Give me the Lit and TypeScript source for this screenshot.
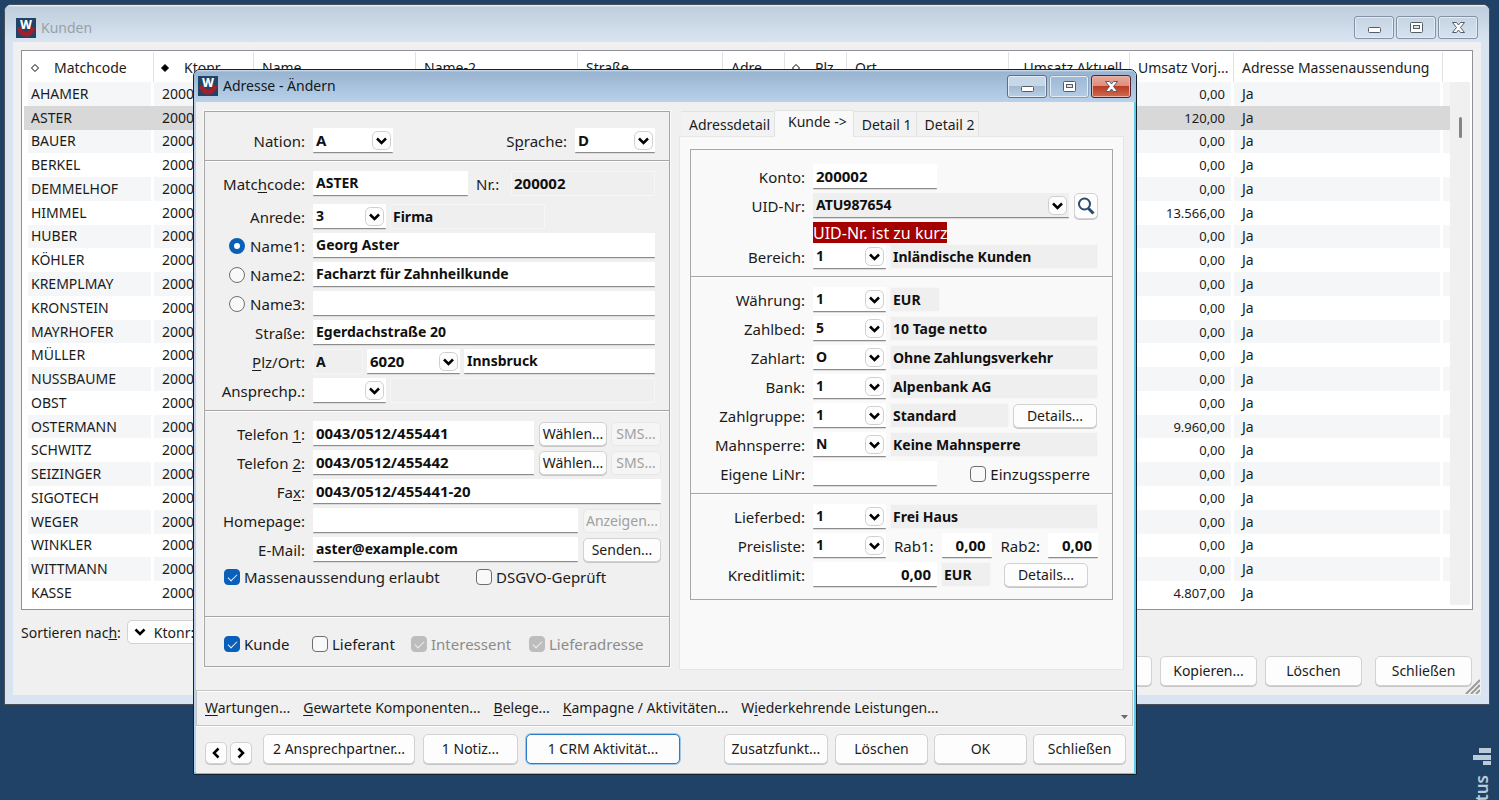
import { LitElement, html, css, svg, nothing } from "lit";
import { customElement, property } from "lit/decorators.js";
import { classMap } from "lit/directives/class-map.js";

const logo = html`<svg class="logo" viewBox="0 0 20 20" width="20" height="20" overflow="visible" aria-hidden="true">
  <rect width="20" height="20" fill="#1f4468"></rect>
  <path d="M1 9.500a9 9.300 0 0 0 18 0h-4.500a4.600 4.600 0 0 1-9 0z" fill="#a01f2c"></path>
  <text x="10" y="11" text-anchor="middle" font-family="Noto Sans, sans-serif" font-weight="800" font-size="12" fill="#fff">W</text>
</svg>`;

const glyphs = {
  min: svg`<rect x="3.500" y="8.500" width="12" height="5" rx="1" fill="#fff" stroke="#555c66"></rect>`,
  max: svg`<rect x="3.500" y="3.500" width="12" height="10" rx="1" fill="#fff" stroke="#555c66"></rect>
    <rect x="6.500" y="6.500" width="6" height="3" fill="#dfe6ee" stroke="#555c66"></rect>`,
  close: svg`<path d="M3.500 3.500h4l2 2.500 2-2.500h4l-4 5 4 5h-4l-2-2.500-2 2.500h-4l4-5z" fill="#fff" stroke="#555c66" stroke-linejoin="round"></path>`,
};

@customElement("win-frame")
export class WinFrame extends LitElement {
  @property() heading = "";
  @property({ type: Boolean, reflect: true }) active = false;

  static styles = css`
    :host {
      display: block;
      box-sizing: border-box;
      border: 1px solid #4a4f55;
      border-radius: 7px 7px 0 0;
      background: #d8e4f1;
      padding: 0 8px 9px;
      font-family: "Noto Sans", sans-serif;
    }
    :host([active]) {
      border-color: #12212c;
      background: #b9d1ea;
      padding: 0 2px 1px;
      box-shadow: inset -1px -1px 0 1px #5fcbe6;
    }
    .bar {
      display: flex;
      align-items: center;
      height: 37px;
      margin: 0 -8px;
      padding: 8px 11px 0;
      box-sizing: border-box;
      border-radius: 6px 6px 0 0;
      background: linear-gradient(#f4f8fb, #bfcedd 2px, #d8e4f1);
    }
    :host([active]) .bar {
      height: 32px;
      margin: 0 -2px;
      padding: 0 5px 0 4px;
      background: linear-gradient(#d4e2f0, #99b4d1 2px, #b9d1ea);
      box-shadow: inset -1px 0 0 #8fd2ea;
    }
    h1 {
      flex: 1;
      margin: 0 0 0 5px;
      font-size: 14px;
      line-height: 20px;
      font-weight: 400;
      color: #9aa0a8;
    }
    :host([active]) h1 {
      color: #101820;
    }
    .controls {
      display: flex;
      gap: 2px;
    }
    .controls button {
      width: 40px;
      height: 23px;
      padding: 0;
      display: grid;
      place-items: center;
      border: 1px solid #8391a2;
      border-radius: 3px;
      background: transparent;
      box-shadow: inset 0 0 0 1px #e3ecf5;
    }
    :host([active]) .controls button {
      border-color: #5c6f84;
      background: linear-gradient(#c6d7e8 50%, #a3bad2 50%, #b9cfe5);
    }
    :host([active]) .controls button.maxi {
      border-color: #8aa3bf;
      background: transparent;
    }
    :host([active]) .controls button.shut {
      border-color: #55222a;
      background: linear-gradient(#e9a99c, #d98c7c 50%, #b93c24 50%, #cf6a50);
      box-shadow: inset 0 0 0 1px #e8b3a8;
    }
    .client {
      background: #f0f0f0;
    }
  `;

  render() {
    return html`
      <header class="bar">
        ${logo}
        <h1>${this.heading}</h1>
        <div class="controls">
          <button aria-label="Minimieren"><svg width="19" height="17">${glyphs.min}</svg></button>
          <button class="maxi" aria-label="Maximieren"><svg width="19" height="17">${glyphs.max}</svg></button>
          <button class="shut" aria-label="Fenster schließen"><svg width="19" height="17">${glyphs.close}</svg></button>
        </div>
      </header>
      <div class="client"><slot></slot></div>
    `;
  }
}

const controls = css`
  * {
    box-sizing: border-box;
  }
  input,
  select,
  button {
    font-family: inherit;
    color: inherit;
    margin: 0;
  }
  .btn {
    height: 30px;
    padding: 0 4px;
    border: 1px solid #d2d2d2;
    border-radius: 5px;
    background: #fdfdfd;
    font-size: 14px;
    line-height: 20px;
    white-space: nowrap;
    box-shadow: 0 1px 0 #c6c6c6;
  }
  .btn.small {
    height: 24px;
    padding: 0;
  }
  .btn.focus {
    border: 1px solid #2a7cc7;
    box-shadow: 0 0 0 1px #9cc6ea;
  }
  .btn:disabled {
    color: #a0a0a0;
    background: #f5f5f5;
    border-color: #e8e8e8;
    box-shadow: none;
  }
  .btn.wide {
    width: 93px;
  }
`;

const names = ["AHAMER", "ASTER", "BAUER", "BERKEL", "DEMMELHOF", "HIMMEL", "HUBER", "KÖHLER", "KREMPLMAY", "KRONSTEIN", "MAYRHOFER", "MÜLLER", "NUSSBAUME", "OBST", "OSTERMANN", "SCHWITZ", "SEIZINGER", "SIGOTECH", "WEGER", "WINKLER", "WITTMANN", "KASSE"];
const turnover: Record<string, string> = { ASTER: "120,00", HIMMEL: "13.566,00", OSTERMANN: "9.960,00", KASSE: "4.807,00" };

const diamond = (fill: string) => html`<svg class="sort" width="10" height="10" viewBox="0 0 10 10" aria-hidden="true">
  <path d="M5 1.500 8.500 5 5 8.500 1.500 5z" fill=${fill} stroke="#000"></path></svg>`;

@customElement("customer-list")
export class CustomerList extends LitElement {
  static styles = [
    controls,
    css`
      :host {
        display: block;
        padding: 8px 8px 9px;
        font-size: 14px;
        color: #1b1b1b;
      }
      .frame {
        display: flex;
        padding: 1px 2px 4px;
        border: 1px solid #8e9197;
        background: #fff;
      }
      table {
        flex: 1;
        width: 100%;
        height: 553px;
        table-layout: fixed;
        border-collapse: separate;
        border-spacing: 0;
      }
      .c-code { width: 130px; }
      .c-no { width: 100px; }
      .c-name { width: 162px; }
      .c-street { width: 145px; }
      .c-short { width: 62px; }
      .c-turn { width: 121px; }
      .c-prev { width: 104px; }
      .c-mass { width: 209px; }
      th {
        height: 30px;
        padding: 0 0 0 8px;
        border-right: 1px solid #e2e2e2;
        text-align: left;
        font-weight: 400;
        white-space: nowrap;
        overflow: hidden;
      }
      th:last-child {
        border: 0;
      }
      th.num {
        padding-right: 7px;
        text-align: right;
      }
      .sort {
        margin: 0 14px 0 -2px;
      }
      td {
        padding: 0 0 0 8px;
        line-height: 20px;
        border-right: 3px solid #fff;
      }
      td:first-child {
        padding-left: 3px;
        border-left: 4px solid #fff;
      }
      td:last-child {
        border-right: 0;
      }
      td.num {
        padding-right: 6px;
        text-align: right;
        font-size: 13px;
      }
      tbody tr:nth-child(odd) td {
        background: #f4f6f8;
      }
      tbody tr.selected td {
        background: #d8d8d8;
        border-color: #d8d8d8;
      }
      .scroll {
        width: 20px;
        margin-top: 30px;
        padding-top: 35px;
        background: #f0f0f0;
      }
      .thumb {
        width: 3px;
        height: 21px;
        margin-left: 9px;
        border-radius: 2px;
        background: #858585;
      }
      .order {
        display: flex;
        align-items: center;
        margin-top: 10px;
      }
      .pick {
        position: relative;
        margin-left: 6px;
      }
      .pick select {
        appearance: none;
        width: 190px;
        height: 24px;
        padding: 0 0 0 26px;
        border: 1px solid #d2d2d2;
        border-radius: 5px;
        background: #fdfdfd;
        font-size: 14px;
      }
      .pick svg {
        position: absolute;
        left: 7px;
        top: 7px;
        pointer-events: none;
      }
      .actions {
        display: flex;
        justify-content: flex-end;
        gap: 8px;
        margin-top: 12px;
        padding-right: 1px;
      }
      .actions .btn {
        width: 97px;
      }
      .actions .btn:last-of-type {
        margin-left: 5px;
      }
      .grip {
        position: absolute;
        right: 9px;
        bottom: 10px;
      }
    `,
  ];

  render() {
    return html`
      <div class="frame">
        <table>
          <colgroup>
            <col class="c-code"><col class="c-no"><col class="c-name"><col class="c-name"><col class="c-street">
            <col class="c-short"><col class="c-short"><col class="c-name"><col class="c-turn"><col class="c-prev"><col class="c-mass"><col>
          </colgroup>
          <thead>
            <tr>
              <th>${diamond("#fff")}Matchcode</th><th>${diamond("#000")}Ktonr</th><th>Name</th><th>Name-2</th><th>Straße</th>
              <th>Adre...</th><th>${diamond("#fff")}Plz</th><th>Ort</th><th class="num">Umsatz Aktuell</th><th>Umsatz Vorj...</th>
              <th>Adresse Massenaussendung</th><th></th>
            </tr>
          </thead>
          <tbody>
            ${names.map((name, i) => html`
              <tr class=${classMap({ selected: name === "ASTER" })}>
                <td>${name}</td><td>${200001 + i}</td><td></td><td></td><td></td><td></td><td></td><td></td><td></td>
                <td class="num">${turnover[name] ?? "0,00"}</td><td>Ja</td><td></td>
              </tr>`)}
          </tbody>
        </table>
        <div class="scroll"><div class="thumb"></div></div>
      </div>
      <div class="order">
        <label for="order">Sortieren nac<u>h</u>:</label>
        <span class="pick">
          <select id="order"><option>Ktonr:</option></select>
          <svg width="12" height="10"><path d="M1.500 2.500 6 7l4.500-4.500" fill="none" stroke="#000" stroke-width="2.500"></path></svg>
        </span>
      </div>
      <div class="actions">
        <button class="btn">Ändern...</button>
        <button class="btn">Kopieren...</button>
        <button class="btn">Löschen</button>
        <button class="btn">Schließen</button>
      </div>
      <svg class="grip" width="15" height="15"><path d="M1 15 15 1M6 15 15 6M11 15l4-4" stroke="#9a9a9a" stroke-width="2"></path></svg>
    `;
  }
}

type Opt = { ro?: boolean; right?: boolean; digits?: boolean };

@customElement("address-form")
export class AddressForm extends LitElement {
  static styles = [
    controls,
    css`
      :host {
        display: block;
        color: #1b1b1b;
        font-size: 15px;
        line-height: 20px;
      }
      .panes {
        display: flex;
        align-items: flex-start;
        gap: 9px;
        padding: 8px 10px 20px 8px;
      }
      .box {
        border: 1px solid #a6a6a6;
        box-shadow: 0 0 0 1px #fafafa;
      }
      .left {
        flex: 0 0 466px;
        margin-top: 1px;
      }
      .right {
        flex: 1;
        min-width: 0;
      }
      section {
        padding: 9px 14px 3px 0;
      }
      section + section {
        border-top: 1px solid #a6a6a6;
        box-shadow: inset 0 1px 0 #fdfdfd;
        padding-top: 10px;
      }
      .left section:first-child {
        padding-top: 16px;
      }
      .right section:first-child {
        padding-top: 14px;
      }
      .right section:last-child {
        padding-bottom: 8px;
      }
      .left section.contact {
        padding-right: 8px;
        padding-bottom: 28px;
      }
      .left section.roles {
        padding: 16px 0 11px;
      }
      .row {
        display: flex;
        align-items: center;
        height: 25px;
        margin-bottom: 4px;
      }
      .row.apart {
        margin-bottom: 8px;
      }
      .lead {
        flex: none;
        width: 100px;
        margin-right: 8px;
        display: flex;
        justify-content: flex-end;
        align-items: center;
        gap: 5px;
        white-space: nowrap;
      }
      .right .lead {
        width: 114px;
      }
      .mid {
        margin: 0 8px;
        white-space: nowrap;
      }
      .push {
        margin-left: auto;
      }
      u {
        text-underline-offset: 2px;
      }
      .field {
        width: 100%;
        height: 25px;
        padding: 0 3px 1px;
        border: 0;
        border-bottom: 1px solid #8c8c8c;
        background: #fff;
        font-size: 14px;
        font-weight: 700;
        color: #101010;
        border-radius: 1px;
        box-shadow: 0 1px 0 #dcdcdc;
        outline: 0;
      }
      .field.ro {
        border: 1px solid #f6f6f6;
        background: #efefef;
        padding: 0 2px 1px;
        box-shadow: none;
      }
      .field.digits {
        font-size: 15px;
      }
      .field.rt {
        padding-right: 6px;
        text-align: right;
      }
      .combo {
        position: relative;
        flex: none;
        display: block;
      }
      .combo select {
        appearance: none;
      }
      .combo.grey select {
        background: #efefef;
      }
      .combo svg {
        position: absolute;
        right: 2px;
        top: 3px;
        pointer-events: none;
      }
      .cell {
        flex: none;
      }
      .cell,
      .combo {
        line-height: 0;
      }
      .grow {
        flex: 1;
        min-width: 0;
      }
      .gap4 {
        margin-left: 4px;
      }
      .w50 { width: 50px; }
      .w73 { width: 73px; }
      .w80 { width: 80px; }
      .w93 { width: 93px; }
      .w119 { width: 119px; }
      .w124 { width: 124px; }
      .w144 { width: 144px; }
      .w155 { width: 155px; }
      .w256 { width: 256px; }
      .call { width: 68px; margin-left: 5px; }
      .sms { width: 50px; margin-left: 4px; }
      .web { width: 78px; margin-left: 5px; }
      .details { width: 84px; margin-left: 4px; }
      .details.far { margin: 0 10px 0 auto; }
      .lens {
        width: 26px;
        height: 26px;
        margin-left: 5px;
        padding: 0;
        display: grid;
        place-items: center;
      }
      .warn {
        display: flex;
        height: 22px;
        padding-left: 122px;
      }
      .warn span {
        height: 21px;
        background: #a40000;
        color: #fff;
        font-size: 16px;
        line-height: 22px;
      }
      input[type="checkbox"],
      input[type="radio"] {
        appearance: none;
        flex: none;
        width: 16px;
        height: 16px;
        border: 1px solid #6e6e6e;
        border-radius: 4px;
        background: #f9f9f9;
        display: grid;
        place-items: center;
      }
      input[type="radio"] {
        border-radius: 50%;
      }
      input[type="radio"]:checked {
        border: 5px solid #0a5fb8;
        background: #fff;
      }
      input[type="checkbox"]:checked {
        border-color: #0a5fb8;
        background: #0a5fb8;
      }
      input[type="checkbox"]:checked::after {
        content: "";
        width: 8px;
        height: 4px;
        border: solid #e8f2fb;
        border-width: 0 0 1px 1px;
        transform: translateY(-1px) rotate(-45deg);
      }
      input[type="checkbox"]:disabled {
        border-color: #bdbdbd;
        background: #bdbdbd;
      }
      .check {
        display: flex;
        align-items: center;
        gap: 4px;
        white-space: nowrap;
      }
      .check.off {
        color: #8b8b8b;
      }
      .checks {
        display: grid;
        align-items: center;
        height: 22px;
        padding-left: 19px;
        grid-template-columns: 252px auto;
      }
      .roles .checks {
        grid-template-columns: 88px 99px 118px auto;
      }
      .tabs {
        display: flex;
        align-items: flex-end;
        height: 26px;
        padding-left: 2px;
      }
      .tab {
        height: 25px;
        padding: 1px 4px 0 8px;
        border: 1px solid #e2e2e2;
        border-width: 1px 1px 0 0;
        background: #f2f2f2;
        font-size: 14px;
        line-height: 20px;
        white-space: nowrap;
      }
      .tab.on {
        height: 27px;
        margin-bottom: -1px;
        padding: 0 6px 4px 13px;
        background: #f9f9f9;
        z-index: 1;
      }
      .page {
        padding: 12px 10px 69px;
        border: 1px solid #e6e6e6;
        background: #f9f9f9;
      }
      .menu {
        display: flex;
        position: relative;
        gap: 13px;
        margin: 0 1px 0 0;
        padding: 7px 8px;
        border: 1px solid #c4c4c4;
        font-size: 14px;
        box-shadow: inset 0 1px 0 #fff, 0 1px 0 #fff;
      }
      .menu a {
        color: inherit;
        text-decoration: none;
      }
      .menu svg {
        position: absolute;
        right: 4px;
        bottom: 6px;
      }
      .foot {
        display: flex;
        align-items: flex-end;
        padding: 8px 8px 9px 9px;
        gap: 6px;
      }
      .nav {
        width: 22px;
        height: 22px;
        padding: 0;
        display: grid;
        place-items: center;
      }
      .nav + .nav {
        margin-left: -3px;
        margin-right: 5px;
      }
      .persons { width: 152px; }
      .note { width: 95px; margin: 0 2px; }
      .crm { width: 154px; }
      .extra { width: 104px; margin-left: auto; margin-right: 1px; }
    `,
  ];

  private text(value: string, width: string, name: string, o: Opt = {}, id?: string) {
    const cls = { field: true, ro: !!o.ro, rt: !!o.right, digits: !!o.digits };
    return html`<span class="cell ${width}"><input id=${id ?? nothing} class=${classMap(cls)} .value=${value} ?readonly=${!!o.ro} aria-label=${id ? nothing : name}></span>`;
  }

  private combo(value: string, width: string, id: string, extra = "", digits = false) {
    return html`<span class="combo ${width} ${extra}">
      <select id=${id} class=${classMap({ field: true, digits })}><option>${value}</option></select>
      <svg width="19" height="20" viewBox="0 0 19 20" aria-hidden="true">
        <rect x="0.500" y="0.500" width="18" height="18" rx="5" fill="#fdfdfd" stroke="#cfcfcf"></rect>
        <path d="M5 7.500 9.500 12 14 7.500" fill="none" stroke="#000" stroke-width="2.500"></path>
      </svg></span>`;
  }

  private check(text: unknown, on = false, off = false) {
    return html`<label class=${classMap({ check: true, off })}><input type="checkbox" .checked=${on} ?disabled=${off}>${text}</label>`;
  }

  private lead(id: string, text: unknown) {
    return html`<label class="lead" for=${id}>${text}</label>`;
  }

  private nameRow(n: number, value: string) {
    return html`<div class="row">
      <span class="lead"><input type="radio" name="line" .checked=${n === 1} aria-label=${`Name ${n} verwenden`}><label for=${`name${n}`}>Name${n}:</label></span>
      ${this.text(value, "grow", "", {}, `name${n}`)}
    </div>`;
  }

  private lookup(id: string, label: string, code: string, desc: string) {
    return html`<div class="row">${this.lead(id, label)}${this.combo(code, "w73", id)}${this.text(desc, "grow gap4", `${label} Text`, { ro: true })}</div>`;
  }

  private get leftPane() {
    return html`<div class="left box">
      <section>
        <div class="row">
          ${this.lead("nation", "Nation:")}${this.combo("A", "w80", "nation", "", true)}
          <label class="mid push" for="lang">S<u>p</u>rache:</label>${this.combo("D", "w80", "lang", "", true)}
        </div>
      </section>
      <section>
        <div class="row apart">
          ${this.lead("match", html`<span>Matc<u>h</u>code:</span>`)}${this.text("ASTER", "w155", "", {}, "match")}
          <label class="mid" for="no">Nr.:</label>${this.text("200002", "w144 push", "", { ro: true, digits: true }, "no")}
        </div>
        <div class="row">
          ${this.lead("salut", "Anrede:")}${this.combo("3", "w73", "salut")}
          ${this.text("Firma", "w155 gap4", "Anrede Text", { ro: true })}
        </div>
        ${this.nameRow(1, "Georg Aster")} ${this.nameRow(2, "Facharzt für Zahnheilkunde")} ${this.nameRow(3, "")}
        <div class="row">${this.lead("street", "Straße:")}${this.text("Egerdachstraße 20", "grow", "", {}, "street")}</div>
        <div class="row">
          ${this.lead("zip", html`<span><u>P</u>lz/Ort:</span>`)}${this.text("A", "w50", "Land", { ro: true })}
          ${this.combo("6020", "w93 gap4", "zip", "", true)}${this.text("Innsbruck", "grow gap4", "Ort")}
        </div>
        <div class="row">
          ${this.lead("contact", "Ansprechp.:")}${this.combo("", "w73", "contact")}${this.text("", "grow gap4", "Ansprechpartner", { ro: true })}
        </div>
      </section>
      <section class="contact">
        ${[1, 2].map((n) => html`<div class="row">
          ${this.lead(`tel${n}`, html`<span>Telefon <u>${n}</u>:</span>`)}${this.text(`0043/0512/45544${n}`, "grow", "", { digits: true }, `tel${n}`)}
          <button class="btn small call">Wählen...</button><button class="btn small sms" disabled>SMS...</button>
        </div>`)}
        <div class="row">${this.lead("fax", html`<span>Fa<u>x</u>:</span>`)}${this.text("0043/0512/455441-20", "grow", "", { digits: true }, "fax")}</div>
        <div class="row">
          ${this.lead("home", "Homepage:")}${this.text("", "grow", "", {}, "home")}
          <button class="btn small web" disabled>Anzeigen...</button>
        </div>
        <div class="row">
          ${this.lead("mail", "E-Mail:")}${this.text("aster@example.com", "grow", "", {}, "mail")}
          <button class="btn small web">Senden...</button>
        </div>
        <div class="checks">${this.check("Massenaussendung erlaubt", true)}${this.check("DSGVO-Geprüft")}</div>
      </section>
      <section class="roles">
        <div class="checks">
          ${this.check("Kunde", true)}${this.check("Lieferant")}${this.check("Interessent", true, true)}${this.check("Lieferadresse", true, true)}
        </div>
      </section>
    </div>`;
  }

  private get rightPane() {
    return html`<div class="right">
      <div class="tabs" role="tablist">
        <button class="tab" role="tab">Adressdetail</button>
        <button class="tab on" role="tab" aria-selected="true">Kunde -&gt;</button>
        <button class="tab" role="tab">Detail 1</button>
        <button class="tab" role="tab">Detail 2</button>
      </div>
      <div class="page" role="tabpanel">
        <div class="box">
          <section>
            <div class="row">${this.lead("konto", "Konto:")}${this.text("200002", "w124", "", { digits: true }, "konto")}</div>
            <div class="row">
              ${this.lead("uid", "UID-Nr:")}${this.combo("ATU987654", "w256", "uid", "grey")}
              <button class="btn lens" aria-label="UID-Nr. prüfen">
                <svg width="20" height="20" viewBox="0 0 20 20"><circle cx="8.500" cy="8" r="5.500" fill="none" stroke="#2b4a70" stroke-width="2"></circle>
                <path d="M12.500 12.500 17.500 17.500" stroke="#2b4a70" stroke-width="3"></path></svg>
              </button>
            </div>
            <div class="warn" role="alert"><span>UID-Nr. ist zu kurz</span></div>
            ${this.lookup("area", "Bereich:", "1", "Inländische Kunden")}
          </section>
          <section>
            <div class="row">${this.lead("cur", "Währung:")}${this.combo("1", "w73", "cur")}${this.text("EUR", "w50 gap4", "Währung Text", { ro: true })}</div>
            ${this.lookup("terms", "Zahlbed:", "5", "10 Tage netto")}
            ${this.lookup("paytype", "Zahlart:", "O", "Ohne Zahlungsverkehr")}
            ${this.lookup("bank", "Bank:", "1", "Alpenbank AG")}
            <div class="row">
              ${this.lead("group", "Zahlgruppe:")}${this.combo("1", "w73", "group")}
              ${this.text("Standard", "w119 gap4", "Zahlgruppe Text", { ro: true })}
              <button class="btn small details">Details...</button>
            </div>
            ${this.lookup("dunning", "Mahnsperre:", "N", "Keine Mahnsperre")}
            <div class="row">
              ${this.lead("supno", "Eigene LiNr:")}${this.text("", "w124", "", {}, "supno")}
              <span class="push mid">${this.check("Einzugssperre")}</span>
            </div>
          </section>
          <section>
            ${this.lookup("ship", "Lieferbed:", "1", "Frei Haus")}
            <div class="row">
              ${this.lead("price", "Preisliste:")}${this.combo("1", "w73", "price")}
              <label class="mid" for="rab1">Rab1:</label>${this.text("0,00", "w50", "", { right: true, digits: true }, "rab1")}
              <label class="mid push" for="rab2">Rab2:</label>${this.text("0,00", "w50", "", { right: true, digits: true }, "rab2")}
            </div>
            <div class="row">
              ${this.lead("limit", "Kreditlimit:")}${this.text("0,00", "w124", "", { right: true, digits: true }, "limit")}
              ${this.text("EUR", "w50 gap4", "Kreditlimit Währung", { ro: true })}
              <button class="btn small details far">Details...</button>
            </div>
          </section>
        </div>
      </div>
    </div>`;
  }

  render() {
    return html`
      <div class="panes">${this.leftPane}${this.rightPane}</div>
      <nav class="menu">
        <a href="#"><u>W</u>artungen...</a>
        <a href="#"><u>G</u>ewartete Komponenten...</a>
        <a href="#"><u>B</u>elege...</a>
        <a href="#"><u>K</u>ampagne / Aktivitäten...</a>
        <a href="#">W<u>i</u>ederkehrende Leistungen...</a>
        <svg width="7" height="4"><path d="M0 0h7L3.500 4z" fill="#6b6b6b"></path></svg>
      </nav>
      <div class="foot">
        <button class="btn nav" aria-label="Vorherige"><svg width="12" height="14"><path d="M8.500 2.500 4 7l4.500 4.500" fill="none" stroke="#000" stroke-width="2.500"></path></svg></button>
        <button class="btn nav" aria-label="Nächste"><svg width="12" height="14"><path d="M3.500 2.500 8 7l-4.500 4.500" fill="none" stroke="#000" stroke-width="2.500"></path></svg></button>
        <button class="btn persons">2 Ansprechpartner...</button>
        <button class="btn note">1 Notiz...</button>
        <button class="btn focus crm">1 CRM Aktivität...</button>
        <button class="btn extra">Zusatzfunkt...</button>
        <button class="btn wide">Löschen</button>
        <button class="btn wide">OK</button>
        <button class="btn wide">Schließen</button>
      </div>
    `;
  }
}

@customElement("app-root")
export class AppRoot extends LitElement {
  static styles = css`
    :host {
      display: block;
      position: relative;
      height: 100vh;
      overflow: hidden;
      background: #1f4266;
      font-family: "Noto Sans", sans-serif;
    }
    .list {
      position: absolute;
      top: 4px;
      left: 4px;
      right: 9px;
    }
    .edit {
      position: absolute;
      top: 69px;
      left: 193px;
      width: 944px;
    }
    .status {
      position: absolute;
      top: 748px;
      right: 8px;
      display: flex;
      flex-direction: column;
      align-items: flex-end;
      gap: 9px;
      color: #bccbda;
    }
    .status span {
      writing-mode: vertical-rl;
      transform: rotate(180deg);
      font-size: 17px;
      line-height: 18px;
      font-weight: 600;
    }
  `;

  render() {
    return html`
      <win-frame class="list" heading="Kunden"><customer-list></customer-list></win-frame>
      <win-frame class="edit" heading="Adresse - Ändern" active><address-form></address-form></win-frame>
      <div class="status">
        <svg width="18" height="18" fill="currentColor" aria-hidden="true">
          <rect x="6" y="0" width="12" height="5"></rect><rect x="0" y="7" width="18" height="5"></rect><rect x="10" y="13" width="8" height="4"></rect>
        </svg>
        <span>Status</span>
      </div>
    `;
  }
}
